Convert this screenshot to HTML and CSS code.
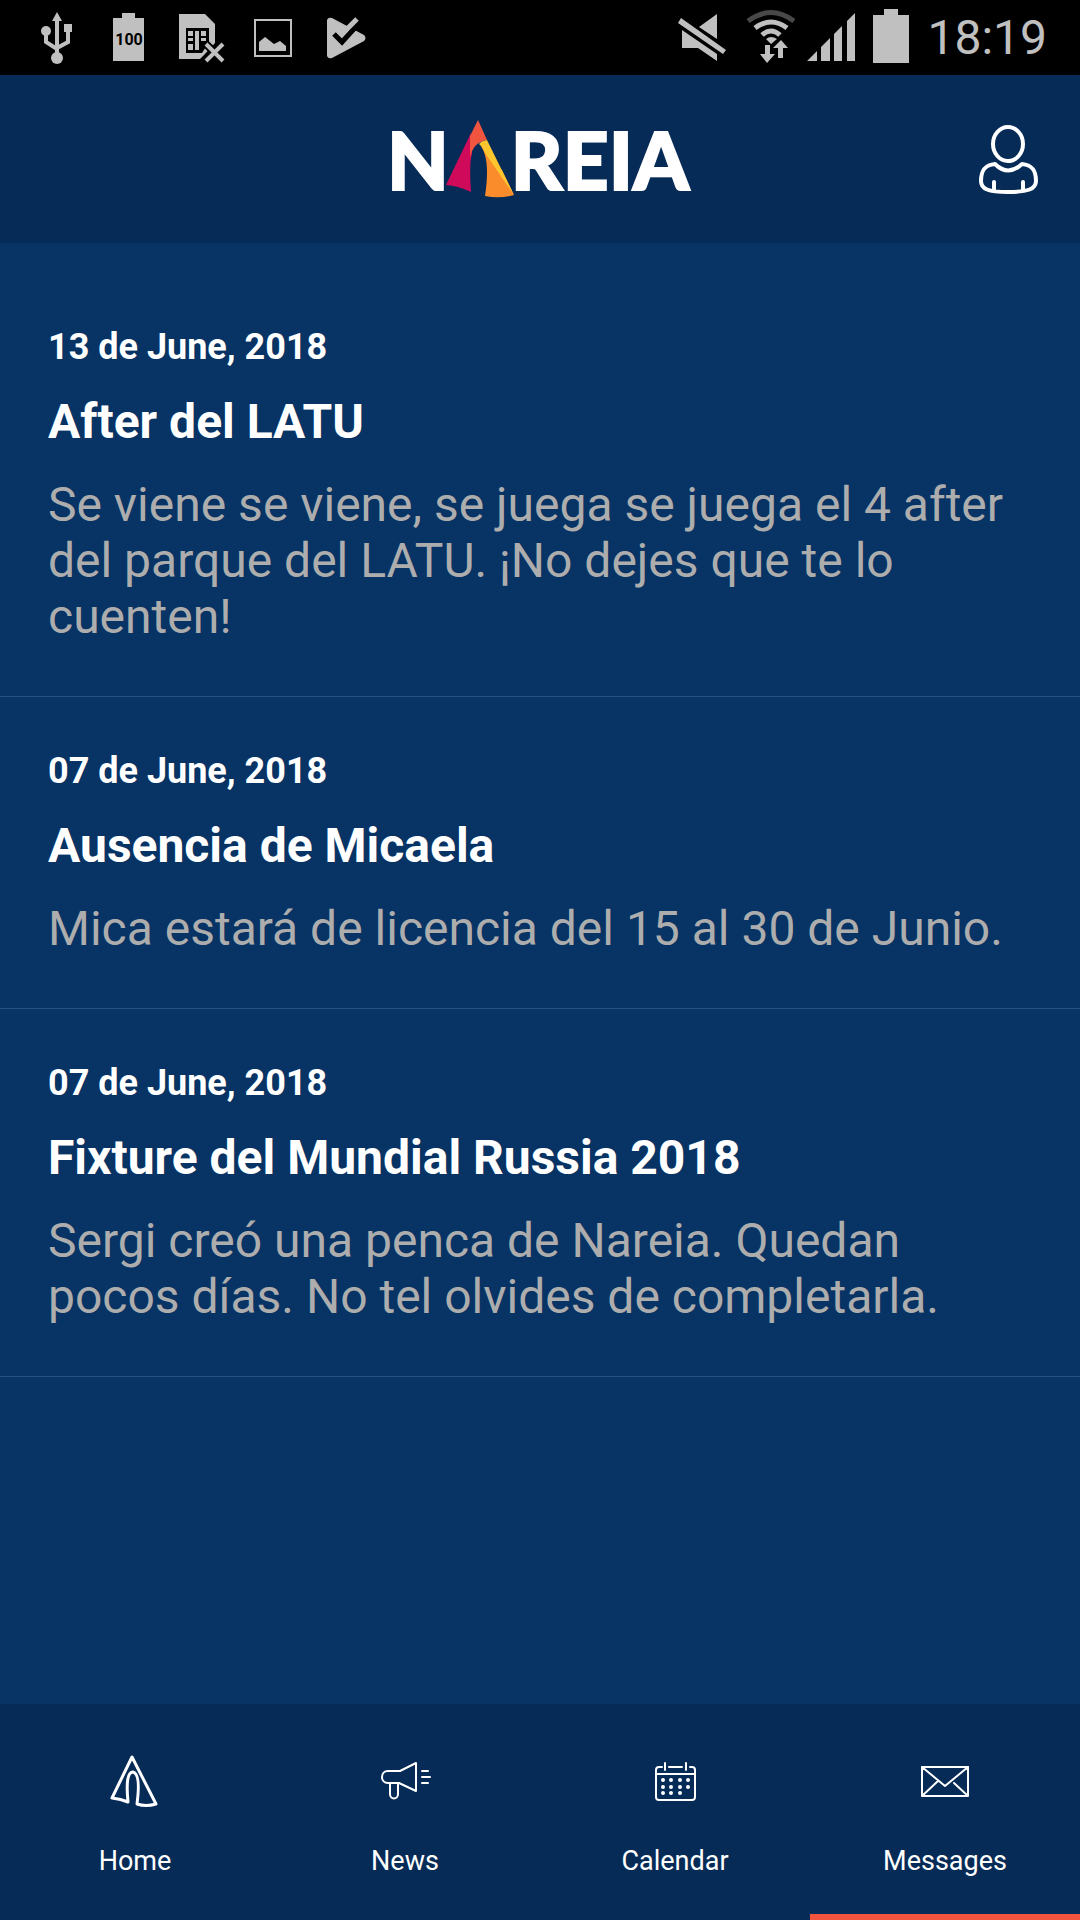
FILE: index.html
```html
<!DOCTYPE html>
<html lang="es">
<head>
<meta charset="utf-8">
<meta name="viewport" content="width=device-width, initial-scale=1">
<title>Nareia - Messages</title>
<link rel="stylesheet" href="styles.css">
</head>
<body>
<div class="status">
  <div class="status-group">
    <svg class="status-icon" viewBox="33 0 48 75" aria-hidden="true">
      <path d="M57 20V56M46 32V42L57 49M68 30V42L57 48" fill="none" stroke="currentColor" stroke-width="4"/>
      <path d="M57 12L62 21H52Z"/><circle cx="46" cy="31" r="5"/><rect x="64" y="24" width="8" height="8"/><circle cx="57" cy="58" r="6"/>
    </svg>
    <svg class="status-icon" viewBox="105 0 48 75" aria-hidden="true">
      <path d="M113 18H122V13H135V18H144V61H113Z"/>
      <text class="charge" x="129" y="45" text-anchor="middle">100</text>
    </svg>
    <svg class="status-icon" viewBox="177 0 48 75" aria-hidden="true">
      <path d="M179 14H205L215 24V43L204 55L200 59H179Z"/>
      <path d="M186 28H209V42L202 53H186Z" fill="#000"/>
      <path d="M188 31H193V36H188ZM188 38H193V41H188ZM188 44H193V50H188ZM195 31H199V50H195ZM201 31H206V36H201ZM201 38H206V41H201Z"/>
      <path d="M206 44L223 61M223 44L206 61" fill="none" stroke="#000" stroke-width="8"/>
      <path d="M206 44L223 61M223 44L206 61" fill="none" stroke="currentColor" stroke-width="4"/>
    </svg>
    <svg class="status-icon" viewBox="249 0 48 75" aria-hidden="true">
      <rect x="255" y="20" width="36" height="36" fill="none" stroke="currentColor" stroke-width="2"/>
      <path d="M259 51V42L265 37L274 44L280 41L286 46V51Z"/>
    </svg>
    <svg class="status-icon" viewBox="321 0 48 75" aria-hidden="true">
      <path d="M327 20Q328 17 332 18L364 35Q367 38 364 41L332 58Q328 59 327 56Z"/>
      <path d="M334 34L342 42L361 21" fill="none" stroke="#000" stroke-width="5"/>
      <path d="M347 27L358 16L364 22L352 34Z" fill="#000"/>
      <path d="M337 29L342 34L357 19" fill="none" stroke="currentColor" stroke-width="5"/>
    </svg>
  </div>
  <div class="status-group status-group-end">
    <svg class="status-icon status-icon-mute" viewBox="678 0 57 75" aria-hidden="true">
      <path d="M699 27L717 14V39ZM681 18L726 50L723 54L678 23ZM682 30L717 54V61L698 48H682Z"/>
    </svg>
    <svg class="status-icon" viewBox="747 0 48 75" aria-hidden="true">
      <g fill="none" stroke="currentColor" stroke-width="5">
        <path class="faint" d="M748 21Q771 4 794 21"/><path d="M755 28Q771 16 787 28"/><path d="M762 35Q771 27 780 35"/>
      </g>
      <path d="M766 39Q771 35 777 39L771 44ZM765 45H770V54H775L767 63L760 54H765ZM781 40L788 48H783V58H778V48H773Z"/>
    </svg>
    <svg class="status-icon" viewBox="807 0 48 75" aria-hidden="true">
      <path d="M807 61L817 51V61ZM821 61V47L830 38V61ZM834 61V34L842 26V61ZM847 61V21L855 13V61Z"/>
    </svg>
    <svg class="status-icon" viewBox="867 0 48 75" aria-hidden="true">
      <path d="M873 15H884V9H898V15H909V63H873Z"/>
    </svg>
    <time class="clock">18:19</time>
  </div>
</div>

<header class="header">
  <h1 class="logo" aria-label="Nareia">
    <span>N</span>
    <svg class="logo-tent" viewBox="439 118 72 82" aria-hidden="true">
      <path fill="#cf0a5b" d="M466 133L441 185Q454 186 466 192Q464 163 467 154Z"/>
      <path fill="#f2553f" d="M473 120L465 136V158Q468 142 482 140Z"/>
      <path fill="#fb8c2c" d="M474 144Q486 156 480 196Q495 199 509 195L497 170Z"/>
      <path fill="#fdc62f" d="M482 140Q476 141 474 144Q476 145 480 153L509 195Z"/>
    </svg>
    <span>REIA</span>
  </h1>
  <button class="account" type="button" aria-label="Account">
    <svg viewBox="978 123 60 72" aria-hidden="true">
      <ellipse cx="1008" cy="144" rx="15" ry="17"/>
      <path d="M995 164Q1008 177 1022 164C1032 165 1036 170 1036 181C1036 189 1028 192 1008 192C988 192 981 189 981 181C981 170 985 165 995 164ZM994 182V190M1023 182V190"/>
    </svg>
  </button>
</header>

<main class="messages">
  <article class="message">
    <time class="message-date" datetime="2018-06-13">13 de June, 2018</time>
    <h2 class="message-title">After del LATU</h2>
    <p class="message-text">Se viene se viene, se juega se juega el 4 after del parque del LATU. ¡No dejes que te lo cuenten!</p>
  </article>
  <article class="message">
    <time class="message-date" datetime="2018-06-07">07 de June, 2018</time>
    <h2 class="message-title">Ausencia de Micaela</h2>
    <p class="message-text">Mica estará de licencia del 15 al 30 de Junio.</p>
  </article>
  <article class="message">
    <time class="message-date" datetime="2018-06-07">07 de June, 2018</time>
    <h2 class="message-title">Fixture del Mundial Russia 2018</h2>
    <p class="message-text">Sergi creó una penca de Nareia. Quedan pocos días. No tel olvides de completarla.</p>
  </article>
</main>

<nav class="tabs">
  <a class="tab" href="#home">
    <svg class="tab-icon" viewBox="105 1751 60 60" aria-hidden="true">
      <path stroke-width="3" d="M132 1757L112 1798Q121 1799 128 1802Q125 1772 133 1772Q141 1774 137 1804Q146 1807 156 1804Z"/>
    </svg>
    <span>Home</span>
  </a>
  <a class="tab" href="#news">
    <svg class="tab-icon" viewBox="375 1751 60 60" aria-hidden="true">
      <path d="M400 1771L416 1763V1791L399 1783H388C380 1783 380 1771 388 1771ZM390 1783V1794C390 1800 398 1800 398 1794V1783M422 1771H428M422 1777H430M422 1783H428"/>
    </svg>
    <span>News</span>
  </a>
  <a class="tab" href="#calendar">
    <svg class="tab-icon" viewBox="645 1751 60 60" aria-hidden="true">
      <path d="M662 1767H659Q656 1767 656 1770V1797Q656 1800 659 1800H692Q695 1800 695 1797V1770Q695 1767 692 1767H690M669 1767H682M665 1763V1770M686 1763V1770M656 1774H695"/>
      <path stroke-width="4" d="M663 1780h0M671 1780h0M680 1780h0M688 1780h0M663 1787h0M671 1787h0M680 1787h0M688 1787h0M663 1793h0M671 1793h0M680 1793h0"/>
    </svg>
    <span>Calendar</span>
  </a>
  <a class="tab tab-active" href="#messages" aria-current="page">
    <svg class="tab-icon" viewBox="915 1751 60 60" aria-hidden="true">
      <path d="M922 1767H968V1796H922ZM922 1767L945 1786L968 1767M922 1796L938 1781M968 1796L954 1783"/>
    </svg>
    <span>Messages</span>
  </a>
</nav>
</body>
</html>
```
FILE: styles.css
```css
* {
  box-sizing: border-box;
}

body {
  margin: 0;
  min-height: 100vh;
  display: flex;
  flex-direction: column;
  background: #073365;
  color: #fff;
  font-family: Roboto, "Liberation Sans", sans-serif;
}

h1,
h2,
p {
  margin: 0;
}

.status {
  display: flex;
  justify-content: space-between;
  align-items: center;
  height: 75px;
  padding: 0 33px;
  background: #000;
  color: #c0c0c0;
}

.status-group {
  display: flex;
  align-items: center;
  gap: 24px;
}

.status-group-end {
  gap: 12px;
}

.status-icon {
  display: block;
  width: 48px;
  height: 75px;
  fill: currentColor;
}

.status-icon-mute {
  width: 57px;
}

.faint {
  stroke: #484848;
}

.charge {
  fill: #000;
  font-size: 16px;
  font-weight: 700;
}

.clock {
  font-size: 48px;
  line-height: 56px;
}

.header {
  display: grid;
  grid-template-columns: 1fr auto 1fr;
  align-items: center;
  height: 168px;
  padding: 0 42px;
  background: #062b57;
}

.logo {
  grid-column: 2;
  display: flex;
  align-items: center;
  padding-right: 4px;
  font-family: Lato, "Open Sans", sans-serif;
  font-size: 80px;
  font-weight: 900;
  line-height: 82px;
  -webkit-text-stroke: 2px currentColor;
}

.logo-tent {
  width: 72px;
  height: 82px;
  margin: 0 -5px;
}

.account {
  justify-self: end;
  width: 60px;
  height: 72px;
  padding: 0;
  border: 0;
  background: none;
  color: inherit;
}

.account svg {
  display: block;
  fill: none;
  stroke: currentColor;
  stroke-width: 4;
  stroke-linecap: round;
  stroke-linejoin: round;
}

.messages {
  flex: 1;
  padding-top: 30px;
}

.message {
  padding: 53px 48px 51px;
  border-bottom: 1px solid #27507f;
}

.message-date {
  display: block;
  margin-bottom: 26px;
  font-size: 36px;
  font-weight: 700;
  line-height: 42px;
}

.message-title {
  margin-bottom: 27px;
  font-size: 48px;
  font-weight: 700;
  line-height: 56px;
}

.message-text {
  color: #adadad;
  font-size: 48px;
  line-height: 56px;
}

.tabs {
  display: grid;
  grid-template-columns: repeat(4, 1fr);
  height: 216px;
  background: #062b57;
}

.tab {
  display: flex;
  flex-direction: column;
  align-items: center;
  gap: 32px;
  padding-top: 47px;
  border-bottom: 6px solid transparent;
  color: #fff;
  font-size: 27px;
  line-height: 36px;
  text-decoration: none;
}

.tab-active {
  border-bottom-color: #f2553f;
}

.tab-icon {
  width: 60px;
  height: 60px;
  fill: none;
  stroke: currentColor;
  stroke-width: 2;
  stroke-linecap: round;
  stroke-linejoin: round;
}
```
